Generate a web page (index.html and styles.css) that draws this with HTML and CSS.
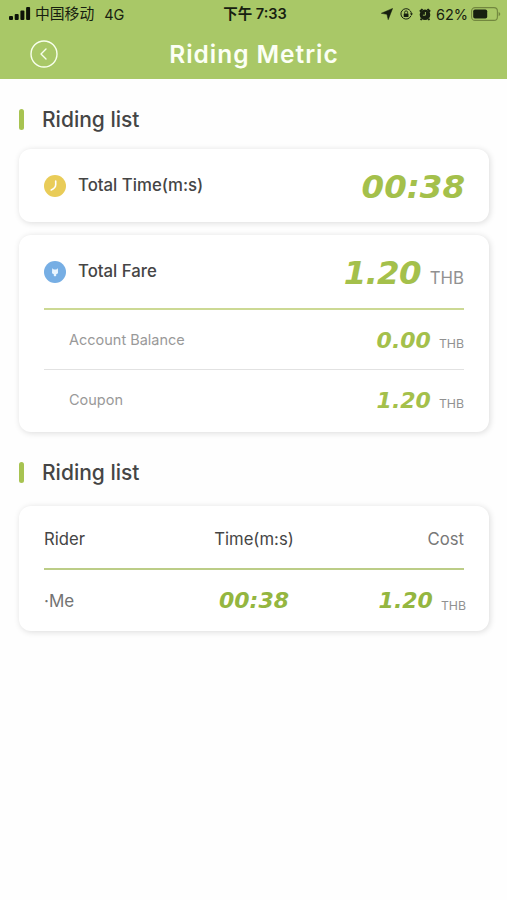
FILE: index.html
```html
<!DOCTYPE html>
<html lang="en">
<head>
<meta charset="utf-8">
<title>Riding Metric</title>
<link rel="stylesheet" href="styles.css">
</head>
<body>
<header class="header">
  <div class="status">
    <div class="status-left">
      <svg class="signal" width="22" height="14" viewBox="0 0 22 14"><rect x="0" y="9" width="4" height="4" rx="1"/><rect x="5.7" y="7" width="4" height="6" rx="1"/><rect x="11.4" y="3.6" width="4" height="9.4" rx="1"/><rect x="17.1" y="0" width="4" height="13" rx="1"/></svg>
      <span class="carrier">中国移动</span>
      <span class="network">4G</span>
    </div>
    <div class="clock">下午 7:33</div>
    <div class="status-right">
      <svg width="12" height="12" viewBox="0 0 12 12"><path d="M11.6.4 7.2 11.7 5.9 6.3.3 5.3z" stroke="#172010" stroke-width=".5" stroke-linejoin="round"/></svg>
      <svg class="lock" width="13" height="12" viewBox="0 0 13 12"><path d="M9.8 2.2A5.2 5.2 0 1 0 11 7.7M10.2 2.7a5 5 0 0 1 1.2 3.2" fill="none" stroke="#172010" stroke-width="1"/><path d="M9.9 5.4h3.1l-1.5 2.2z"/><rect x="3.7" y="5.4" width="4.8" height="3.6" rx=".5"/><path d="M4.6 5.6V4.4a1.5 1.5 0 0 1 3 0v1.2" fill="none" stroke="#172010" stroke-width=".9"/></svg>
      <svg class="alarm" width="12" height="13" viewBox="0 0 12 13"><path d="M.3 2.8 2.8.5l1.4 1.1L1.3 4.4zM11.7 2.8 9.2.5 7.8 1.6l2.9 2.8zM1.6 10.2l1.8 1-1 1.3-1.4-.8zM10.4 10.2l-1.8 1 1 1.3 1.4-.8z"/><circle cx="6" cy="6.8" r="5.3"/><path d="M6.4 4v3.2H3.9" fill="none" stroke="#a9c867" stroke-width=".9"/></svg>
      <span class="percent">62%</span>
      <svg class="battery" width="30" height="14" viewBox="0 0 30 14"><rect x=".6" y=".6" width="25.8" height="12.8" rx="3.5" fill="none" stroke="#72873f" stroke-width="1.1"/><rect x="2.2" y="2.4" width="14" height="9.2" rx="1.8"/><path d="M27.6 4.7q3.4 2.3 0 4.6z" fill="#72873f"/></svg>
    </div>
  </div>
  <div class="nav">
    <svg class="back" width="28" height="28" viewBox="0 0 28 28" fill="none" stroke="#f8ffed" stroke-linecap="round" stroke-linejoin="round"><circle cx="14" cy="14" r="13" stroke-width="1.4"/><path d="m16 9-5 5 5 5" stroke-width="1.4"/></svg>
    <h1>Riding Metric</h1>
  </div>
</header>
<main>
  <h2 class="section">Riding list</h2>
  <section class="card time-card">
    <div class="row total">
      <svg class="icon" width="22" height="22" viewBox="0 0 22 22"><circle cx="11" cy="11" r="11" fill="#e9cc58"/><path d="M11.7 6v3.4q0 3.6-4.5 5.5" fill="none" stroke="#fff" stroke-width="1.6" stroke-linecap="round"/></svg>
      <span class="label">Total Time(m:s)</span>
      <span class="num big">00:38</span>
    </div>
  </section>
  <section class="card fare-card">
    <div class="row total">
      <svg class="icon" width="22" height="22" viewBox="0 0 22 22"><circle cx="11" cy="11" r="11" fill="#76aee4"/><path d="M8.2 7.2 9.8 8.4h2.5l1.6-1.2.1 5-1.8 1.1v1.5l-1.2.8-1.2-.8v-1.5L8 12.2z" fill="#e9f5ff"/></svg>
      <span class="label">Total Fare</span>
      <span class="num big tight">1.20</span><span class="unit large">THB</span>
    </div>
    <div class="row sub first">
      <span class="sublabel">Account Balance</span>
      <span class="num">0.00</span><span class="unit">THB</span>
    </div>
    <div class="row sub">
      <span class="sublabel">Coupon</span>
      <span class="num">1.20</span><span class="unit">THB</span>
    </div>
  </section>
  <h2 class="section second">Riding list</h2>
  <section class="card rider-card">
    <div class="cols head">
      <span>Rider</span><span class="mid">Time(m:s)</span><span class="end cost">Cost</span>
    </div>
    <div class="cols body">
      <span class="me">·Me</span><span class="mid"><span class="num">00:38</span></span><span class="end fare"><span class="num">1.20</span><span class="unit">THB</span></span>
    </div>
  </section>
</main>
</body>
</html>
```
FILE: styles.css
```css
* { box-sizing: border-box; }
body {
  margin: 0;
  min-height: 900px;
  background: #fefefe;
  color: #454545;
  font-family: Inter, "Noto Sans CJK SC", sans-serif;
  white-space: nowrap;
}
svg { display: block; flex: none; }
.header { height: 79px; background: #a9c867; }
.status {
  display: grid;
  grid-template-columns: 1fr auto 1fr;
  height: 28px;
  padding: 0 6px 0 9px;
  align-items: center;
  color: #172010;
  fill: #172010;
  font-size: 14.5px;
}
.status-left, .status-right { display: flex; align-items: center; }
.status-right { justify-content: flex-end; }
.signal { margin-right: 4px; fill: #0d1308; }
.carrier { font-size: 14.8px; line-height: 20px; }
.network { margin-left: 10px; }
.clock { font-weight: 600; font-size: 14.5px; line-height: 20px; }
.lock { margin-left: 7px; }
.alarm { margin-left: 6px; }
.percent { margin-left: 5px; }
.battery { margin-left: 3px; }
.nav {
  display: grid;
  grid-template-columns: 28px 1fr 28px;
  align-items: center;
  height: 51px;
  padding: 0 29px 0 30px;
}
h1 {
  margin: 0;
  color: #fcfff5;
  font-size: 24.5px;
  font-weight: 600;
  letter-spacing: .95px;
  line-height: 30px;
  text-align: center;
}
main { padding: 27px 18px 40px 19px; }
.section {
  display: flex;
  align-items: center;
  gap: 18px;
  height: 27px;
  margin: 0 0 16px;
  font-size: 21px;
  font-weight: 500;
}
.section::before {
  content: "";
  width: 5px;
  height: 21px;
  border-radius: 3px;
  background: #a7c351;
}
.card {
  padding: 0 25px;
  border-radius: 12px;
  background: #fff;
  box-shadow: 1px 1px 6px rgba(0, 0, 0, .14);
}
.time-card { height: 73px; }
.fare-card { height: 197px; margin-top: 13px; }
.row { display: flex; align-items: center; }
.total { height: 73px; }
.icon { margin-right: 12px; }
.label { padding-bottom: 2px; font-size: 16.8px; font-weight: 500; }
.num {
  color: #a4c04b;
  font-family: "DejaVu Sans", sans-serif;
  font-size: 22px;
  font-style: italic;
  font-weight: bold;
  line-height: 28px;
}
.row .num { margin-left: auto; padding-top: 2px; }
.row .num.big { margin-right: -1px; font-size: 32.5px; line-height: 40px; }
.row .num.tight { margin-right: 1px; letter-spacing: -.8px; }
.unit { margin-left: 8px; padding-top: 8px; color: #919191; font-size: 12.3px; }
.unit.large { padding-top: 12px; font-size: 16.8px; }
.sub { height: 60px; padding-left: 25px; border-top: 1px solid #e2e2e2; }
.sub.first { height: 61px; border-top: 2px solid #ccd994; }
.sublabel { color: #999; font-size: 14.5px; }
.section.second { margin-top: 27px; margin-bottom: 20px; }
.rider-card { height: 125px; }
.cols { display: grid; grid-template-columns: 1fr 1fr 1fr; align-items: center; }
.head { height: 64px; padding-top: 3px; border-bottom: 2px solid #bccd87; font-size: 16.7px; }
.body { height: 61px; padding-top: 1px; }
.body .num { color: #94b640; }
.mid { text-align: center; }
.end { text-align: right; }
.cost { color: #777; }
.me { color: #737373; font-size: 17px; }
.fare { display: flex; justify-content: flex-end; align-items: center; margin-right: -2px; }
```
